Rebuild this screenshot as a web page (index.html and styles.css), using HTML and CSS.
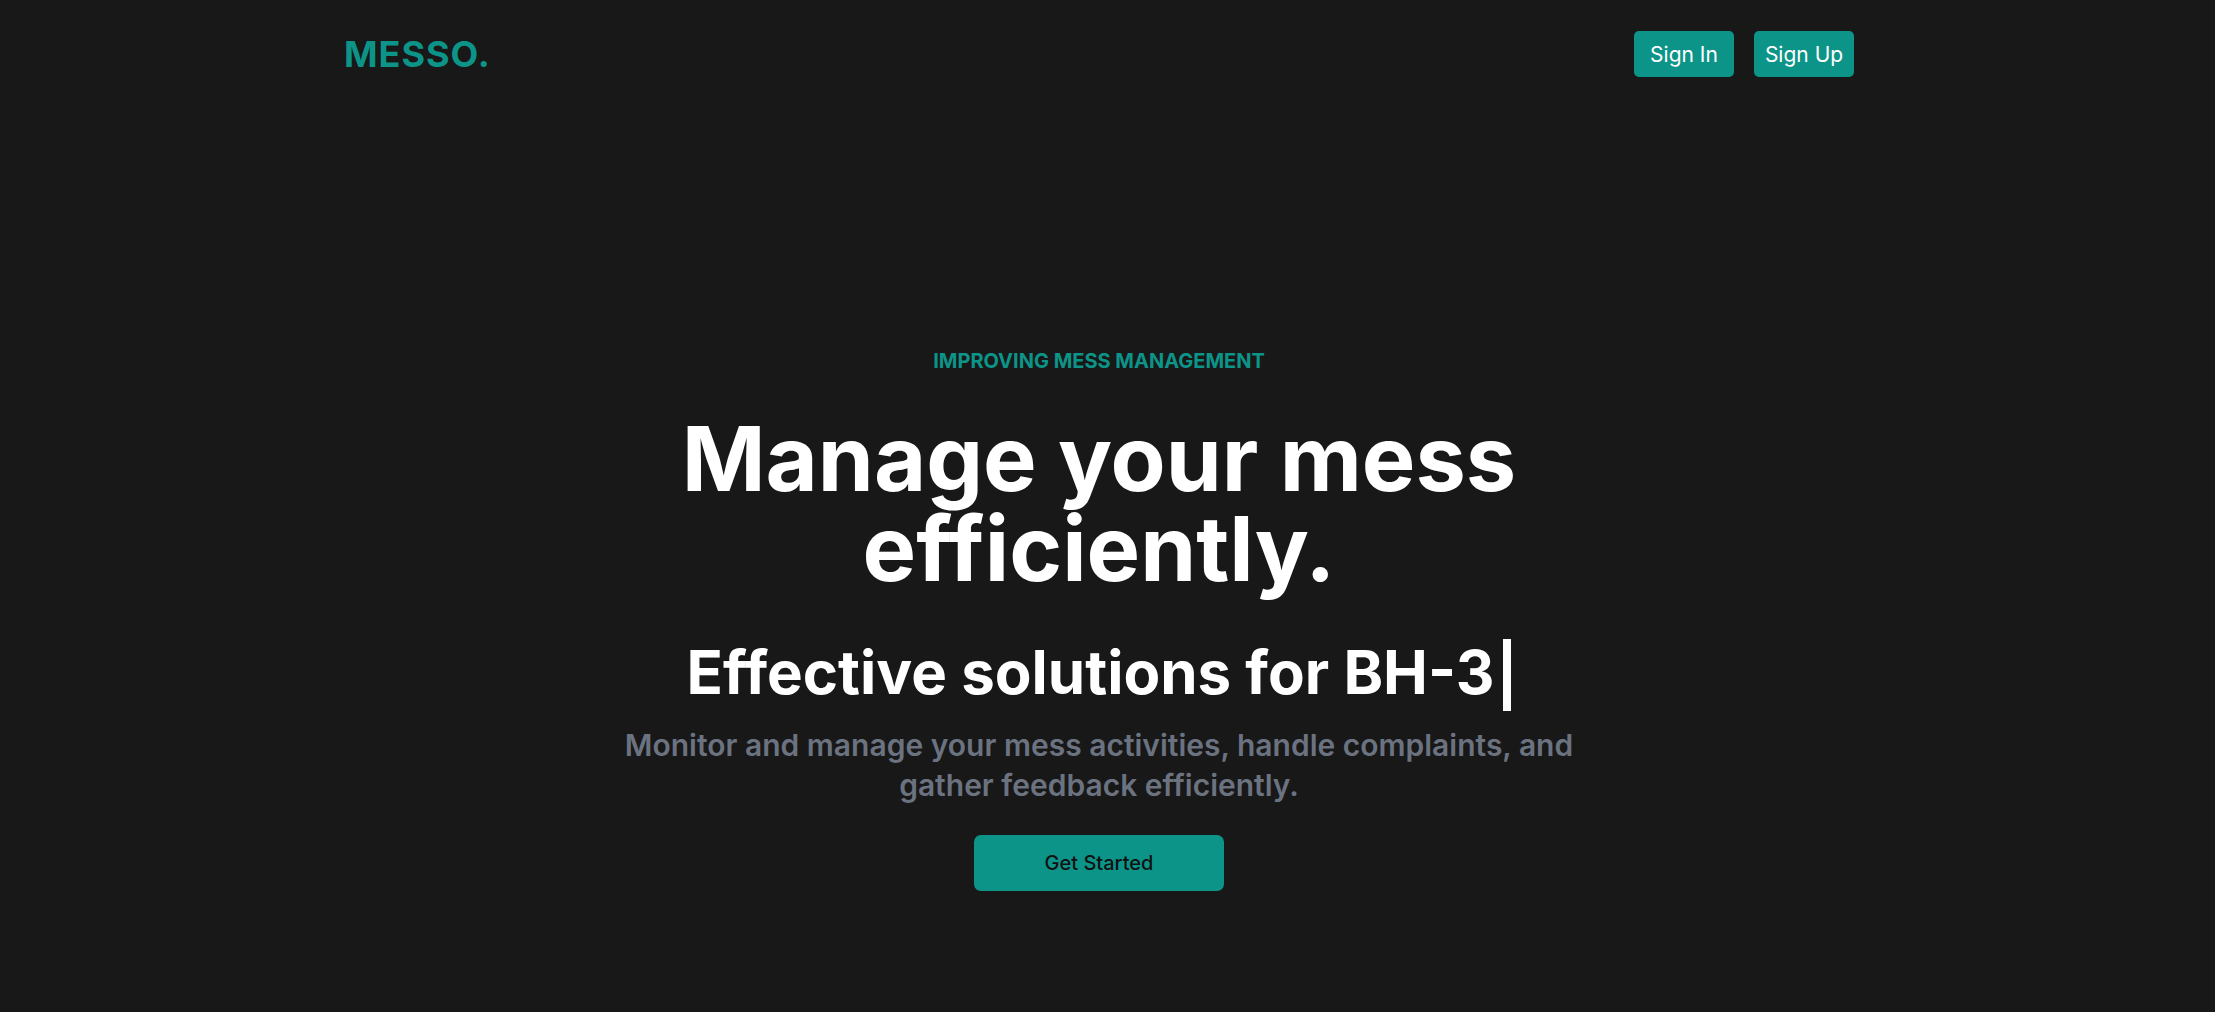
FILE: index.html
```html
<!DOCTYPE html>
<html lang="en">
<head>
<meta charset="utf-8">
<title>MESSO.</title>
<link rel="stylesheet" href="styles.css">
</head>
<body>
<div class="page">
  <header class="nav">
    <a class="logo" href="#">MESSO.</a>
    <div class="actions">
      <button class="btn-nav">Sign In</button>
      <button class="btn-nav">Sign Up</button>
    </div>
  </header>
  <main class="hero">
    <p class="tagline">IMPROVING MESS MANAGEMENT</p>
    <h1 class="title">Manage your mess<br>efficiently.</h1>
    <h2 class="subtitle"><span class="typed">Effective solutions for BH-3</span><span class="cursor"></span></h2>
    <p class="lead">Monitor and manage your mess activities, handle complaints, and gather feedback efficiently.</p>
    <button class="btn-cta">Get Started</button>
  </main>
</div>
</body>
</html>
```

FILE: styles.css
```css
* { box-sizing: border-box; }
html, body { margin: 0; padding: 0; }
body {
  background: #181818;
  font-family: Inter, "Noto Sans", sans-serif;
  color: #fff;
  min-height: 1012px;
}
.page {
  padding-right: 17px;
}
.nav {
  width: 1510px;
  margin: 0 auto;
  padding-top: 31px;
  display: flex;
  align-items: center;
  justify-content: space-between;
}
.logo {
  color: #0d9488;
  font-size: 36px;
  font-weight: 700;
  letter-spacing: 1px;
  line-height: 46px;
  text-decoration: none;
}
.actions {
  display: flex;
  gap: 20px;
}
.btn-nav {
  width: 100px;
  height: 46px;
  border: none;
  border-radius: 5px;
  background: #0d9488;
  color: #fff;
  font-family: Inter, "Noto Sans", sans-serif;
  font-size: 21px;
  font-weight: 400;
  padding: 0;
  cursor: pointer;
}
.hero {
  display: flex;
  flex-direction: column;
  align-items: center;
  text-align: center;
  padding-top: 269px;
}
.tagline {
  margin: 0;
  color: #0d9488;
  font-size: 20px;
  line-height: 30px;
  font-weight: 700;
}
.title {
  margin: 38px 0 0;
  font-size: 90px;
  line-height: 90px;
  font-weight: 700;
}
.subtitle {
  margin: 42px 0 0;
  font-size: 60px;
  line-height: 72px;
  font-weight: 700;
}
.cursor {
  display: inline-block;
  width: 8px;
  height: 72px;
  margin-left: 9px;
  background: #fff;
  vertical-align: -17px;
}
.lead {
  margin: 14px 0 0;
  max-width: 965px;
  color: #6b7280;
  font-size: 30px;
  line-height: 40px;
  font-weight: 600;
}
.btn-cta {
  margin-top: 30px;
  width: 250px;
  height: 56px;
  border: none;
  border-radius: 7px;
  background: #0d9488;
  color: #111;
  font-family: Inter, "Noto Sans", sans-serif;
  font-size: 20px;
  font-weight: 500;
  cursor: pointer;
}
```
